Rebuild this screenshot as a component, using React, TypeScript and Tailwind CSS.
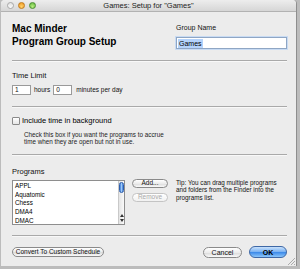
import React from "react"

const font = { fontFamily: '"Liberation Sans", Arial, sans-serif' }

function Pill({
  children,
  className = "",
  disabled = false,
  primary = false,
}: {
  children: React.ReactNode
  className?: string
  disabled?: boolean
  primary?: boolean
}) {
  const tone = primary
    ? "border-[#3e68a6] bg-[linear-gradient(to_bottom,#c9e1fb,#7fb5f3_45%,#3f8cea_55%,#8cc6fb)] text-black"
    : disabled
    ? "border-[#c4c4c4] bg-[linear-gradient(to_bottom,#ffffff,#f1f1f1)] text-[#a9a9a9]"
    : "border-[#8a8a8a] bg-[linear-gradient(to_bottom,#ffffff,#ececec_50%,#dcdcdc_55%,#fafafa)] text-[#111]"
  return (
    <div
      className={`flex items-center justify-center rounded-full border text-[6.5px] leading-none ${tone} ${className}`}
    >
      {children}
    </div>
  )
}

function Separator() {
  return <div className="h-px bg-[#a9a9a9] shadow-[0_1px_0_#f8f8f8]" />
}

const programs = ["APPL", "Aquatomic", "Chess", "DMA4", "DMAC"]

export default function App() {
  return (
    <div className="w-[300px] h-[269px] bg-[#bcbcbc] pl-px overflow-hidden" style={font}>
      <div className="relative w-[296px] h-[266px] bg-[#ececec] rounded-t-[4px] flex flex-col border-r border-[#8e8e8e]">
        {/* title bar */}
        <div className="h-[12px] flex items-center rounded-t-[4px] bg-[linear-gradient(to_bottom,#ededed,#d6d6d6)] border-b border-[#b2b2b2] relative">
          <div className="flex items-center gap-[4px] pl-[6px]">
            <span className="w-[7px] h-[7px] rounded-full border border-[#a8a8a8] bg-[linear-gradient(to_bottom,#e2e2e2,#fbfbfb)]" />
            <span className="w-[7px] h-[7px] rounded-full border border-[#c07a1c] bg-[radial-gradient(circle_at_50%_70%,#ffd36b,#f0951e)]" />
            <span className="w-[7px] h-[7px] rounded-full border border-[#4d8f34] bg-[radial-gradient(circle_at_50%_70%,#b8ec7e,#5db83a)]" />
          </div>
          <div className="absolute inset-0 flex items-center justify-center text-[7.5px] text-[#222]">
            Games: Setup for "Games"
          </div>
        </div>

        <div className="flex flex-col pl-[11px] pr-[9px]">
          {/* header */}
          <div className="h-[48px] flex pt-[10px]">
            <div className="w-[165px] font-bold text-[10px] leading-[13px] text-black">
              <div>Mac Minder</div>
              <div>Program Group Setup</div>
            </div>
            <div className="flex flex-col">
              <div className="text-[7px] leading-[9px] mt-px text-[#111]">Group Name</div>
              <div className="mt-[5px] w-[111px] h-[12px] bg-white border border-[#8fa6c4] shadow-[0_0_0_1px_#c8dbf3] flex items-center pl-[1px] text-[7px]">
                <span className="bg-[#b4d3fb] px-px leading-[9px]">Games</span>
              </div>
            </div>
          </div>
          <Separator />

          {/* time limit */}
          <div className="h-[45px] pt-[10px] text-[7px] text-[#111]">
            <div className="text-[7.5px] leading-[9px]">Time Limit</div>
            <div className="flex items-center mt-[5px] h-[10px]">
              <div className="w-[19px] h-[10px] bg-white border border-[#9a9a9a] text-[6.5px] leading-[8px] pl-[2px]">1</div>
              <span className="ml-[3px] text-[6.5px]">hours</span>
              <div className="ml-[3px] w-[19px] h-[10px] bg-white border border-[#9a9a9a] text-[6.5px] leading-[8px] pl-[2px]">0</div>
              <span className="ml-[4px] text-[6.5px]">minutes per day</span>
            </div>
          </div>
          <Separator />

          {/* background */}
          <div className="h-[47px] pt-[10px]">
            <div className="flex items-center h-[8px]">
              <div className="w-[8px] h-[8px] border border-[#8a8a8a] bg-[linear-gradient(to_bottom,#ffffff,#e6e6e6)] rounded-[1px]" />
              <span className="ml-[2px] text-[7.5px] text-black">Include time in background</span>
            </div>
            <div className="mt-[6px] ml-[12px] text-[6.3px] leading-[7px] text-[#222]">
              <div>Check this box if you want the programs to accrue</div>
              <div>time when they are open but not in use.</div>
            </div>
          </div>
          <Separator />

          {/* programs */}
          <div className="h-[80px] pt-[12px]">
            <div className="text-[7.5px] leading-[9px] text-[#111]">Programs</div>
            <div className="flex mt-[4px]">
              <div className="w-[113px] h-[45px] bg-white border border-[#8e8e8e] flex">
                <div className="flex-1 pl-[2px] pt-px text-[6.3px] leading-[8.7px] text-black">
                  {programs.map((p) => (
                    <div key={p}>{p}</div>
                  ))}
                </div>
                <div className="w-[6px] border-l border-[#c9c9c9] bg-[linear-gradient(to_right,#e4e4e4,#fafafa)] flex flex-col justify-between">
                  <div className="mt-px mx-auto w-[5px] h-[11px] rounded-full bg-[linear-gradient(to_right,#3d78d6,#9ccaf7,#3d78d6)] border border-[#2e5fae]" />
                  <div className="flex flex-col items-center gap-[2px] pb-[2px]">
                    <svg width="4" height="3" viewBox="0 0 4 3"><path d="M2 0 L4 3 L0 3 Z" fill="#333" /></svg>
                    <svg width="4" height="3" viewBox="0 0 4 3"><path d="M0 0 L4 0 L2 3 Z" fill="#333" /></svg>
                  </div>
                </div>
              </div>
              <div className="flex flex-col ml-[7px] -mt-[1px]">
                <Pill className="w-[36px] h-[9px]">Add...</Pill>
                <Pill disabled className="w-[36px] h-[9px] mt-[5px]">Remove</Pill>
              </div>
              <div className="ml-[8px] text-[6.3px] leading-[7.3px] text-[#111] -mt-[1px]">
                <div>Tip: You can drag multiple programs</div>
                <div>and folders from the Finder into the</div>
                <div>programs list.</div>
              </div>
            </div>
          </div>
          <Separator />

          {/* footer */}
          <div className="h-[30px] flex items-center pt-[2px]">
            <Pill className="w-[92px] h-[10px]">Convert To Custom Schedule</Pill>
            <div className="flex-1" />
            <Pill className="w-[39px] h-[11px] text-[7px]">Cancel</Pill>
            <Pill primary className="ml-[7px] w-[38px] h-[12px] font-bold text-[7px]">OK</Pill>
          </div>
        </div>

        {/* resize grip */}
        <svg className="absolute right-[1px] bottom-[1px]" width="8" height="8" viewBox="0 0 8 8">
          <path d="M8 1 L1 8 M8 4 L4 8 M8 7 L7 8" stroke="#9a9a9a" strokeWidth="0.8" />
        </svg>
      </div>
    </div>
  )
}
